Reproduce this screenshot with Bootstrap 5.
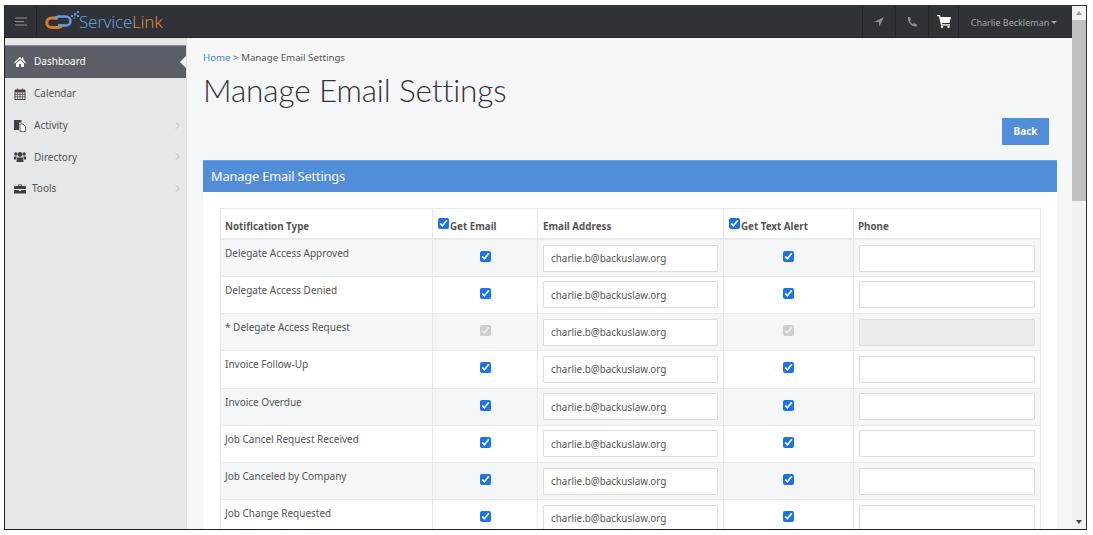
<!DOCTYPE html>
<html lang="en"><head><meta charset="utf-8"><title>Manage Email Settings</title>
<link href="https://cdn.jsdelivr.net/npm/bootstrap@5.3.0/dist/css/bootstrap.min.css" rel="stylesheet">
<style>
html,body{height:100%;overflow:hidden;background:#fff}
body{font-family:"Noto Sans",sans-serif;font-size:10px;color:#555}
.frame{margin:5px 6px 0 4px;height:525px;border:1px solid #222;border-top-color:#333;border-right:1px solid #333;display:flex;overflow:hidden}
.appcol{flex:1;min-width:0;display:flex;flex-direction:column}
.topbar{height:32px;background:#2f3237;flex:none;display:flex;align-items:stretch;color:#aaa;border-bottom:1px solid #222}
.burger{width:32px;display:flex;align-items:center;justify-content:center;border-right:1px solid #24262a}
.brand{display:flex;align-items:center;padding-left:7px;flex:1}
.brandtxt{font-family:"Noto Sans",sans-serif;font-weight:300;font-size:17px;letter-spacing:-.25px;color:#6a9ad6;line-height:1;margin-left:-5px}
.brandtxt span{color:#dd8a40}
.tbitem{width:33px;display:flex;align-items:center;justify-content:center;border-left:1px solid #24262a}
.tbitem.narrow{width:30px}
.tbuser{width:114px;border-left:1px solid #24262a;display:flex;align-items:center;justify-content:center;font-size:9px;color:#a5a7aa;gap:1px;padding-top:2px;padding-right:3px}
.caretdn{display:inline-block;border:3.5px solid transparent;border-top-color:#a5a7aa;border-bottom:0;margin-left:1px}
.lower{flex:1;display:flex;min-height:0}
.side{width:182px;background:#e6e7e8;flex:none;padding-top:7px;border-right:1px solid #ddd}
.sideitem{height:31.7px;display:flex;align-items:center;padding-left:9px;color:#555;font-size:10px;position:relative}
.sideitem svg.ic{width:12px;height:12px;margin-right:8px;flex:none}
.sideitem svg.ictight{margin-right:6px}
.sideitem.on{background:#5a5f67;color:#fff;height:33px;border-top:1px solid #8a8d92;padding-bottom:1px}
.sideitem.on::after{content:"";position:absolute;right:0;top:10px;border:6px solid transparent;border-right-color:#f5f6f8;border-left:0}
.chev{position:absolute;right:6px;top:12px;width:5px;height:7px}
.main{flex:1;min-width:0;background:#f5f6f8;padding:13px 15px 0 16px;overflow:hidden}
.crumb{font-size:9.7px;line-height:14px;color:#555}
.crumb a{color:#4f8bd6;text-decoration:none}
.pagetitle{font-family:Lato,sans-serif;font-size:31.5px;letter-spacing:-.12px;font-weight:300;line-height:40px;color:#333;margin:5px 0 0}
.backrow{display:flex;justify-content:flex-end;padding-right:8px;margin-top:8px}
.backbtn{background:#528dd9;border:0;color:#fff;font-size:10px;font-weight:700;width:47px;height:27px;padding:0;border-radius:1px}
.panelbox{background:#fff;margin-top:15px;height:400px}
.panelhead{height:32px;background:#528dd9;color:#fff;font-size:12.8px;letter-spacing:-.15px;display:flex;align-items:center;padding-left:8px;border-top:1px solid #6fa0df}
.panelbody{padding:16px 17px 0}
.mailtable{width:820px;table-layout:fixed;border-collapse:collapse;margin:0;font-size:10px;color:#555}
.mailtable th,.mailtable td{border:1px solid #e8e9eb;padding:0 5px;vertical-align:top}
.mailtable th{height:30.5px;font-weight:700;font-size:9.8px;vertical-align:middle;border-bottom-width:2px;background:#fff;color:#555;padding-top:7px;white-space:nowrap}
.mailtable th:first-child,.mailtable td:first-child,.mailtable th:last-child{padding-left:4px}
.mailtable td{height:37.25px}
.mailtable tbody tr:nth-child(odd) td{background:#f5f6f8}
.mailtable tbody tr:nth-child(even) td{background:#fff}
.rowlabel{padding-top:6px!important;line-height:14px}
.mailtable input[type=checkbox]{width:11px;height:11px;margin:0;accent-color:#1a73e8}
.thchk{vertical-align:1px;margin-right:1px!important}
.chkhead{padding-top:6px!important}
.chkcell{text-align:center;padding-top:11px!important;line-height:11px}
.addr{display:block;width:100%;height:27px;margin-top:4.5px;border:1px solid #dcdde0;background:#fff;font-size:9.9px;color:#555;padding:0 7px;font-family:inherit;border-radius:1px}
.addr:disabled{background:#ebecee}
.sbar{width:14px;flex:none;background:#f1f1f1;position:relative}
.sbtn{height:14px;display:flex;align-items:center;justify-content:center}
.sup{border:3.5px solid transparent;border-bottom:4px solid #9a9a9a;border-top:0}
.sdn{border:3.5px solid transparent;border-top:4px solid #444;border-bottom:0}
.sthumb{height:181px;background:#c1c1c1}
.sbtn.bot{position:absolute;bottom:0;left:0;right:0}
</style></head><body>
<div class="frame">
 <div class="appcol">
  <div class="topbar">
   <div class="burger"><svg width="12" height="9" viewBox="0 0 12 9"><path d="M0 1h12M0 4.500h9M0 8h12" stroke="#8d8f93" stroke-width="1"/></svg></div>
   <div class="brand">
    <svg width="40" height="24" viewBox="0 0 40 24">
     <path d="M14 8H7.500a4.700 4.700 0 0 0 0 9.400H14a4.700 4.700 0 0 0 4.200-3" fill="none" stroke="#e0782b" stroke-width="3"/>
     <path d="M14 15.500h8a4.500 4.500 0 0 0 0-9h-7a4.500 4.500 0 0 0-4 3" fill="none" stroke="#6a9ad6" stroke-width="2.600"/>
     <path d="M27 5h2v2h-2zM30 3h2.400v2.400H30zM33 1h2v2h-2zM33 5h2v2h-2zM29.500 7.500h1.500V9h-1.500z" fill="#6a9ad6"/>
    </svg>
    <span class="brandtxt">Service<span>Link</span></span>
   </div>
   <div class="tbitem"><svg width="10" height="10" viewBox="0 0 10 10"><path d="M10 0 0 5h5v5z" fill="#8d8f93"/></svg></div>
   <div class="tbitem"><svg width="10" height="10" viewBox="0 0 10 10"><path d="M1 0 3 0 4 3 3 4C3.500 5.500 4.500 6.500 6 7L7 6 10 7.500 9.500 9.500C5 10.500 0 5 1 0Z" fill="#8d8f93"/></svg></div>
   <div class="tbitem narrow"><svg width="14" height="13" viewBox="0 0 14 13"><path d="M0 0h3l.6 2H14l-1.500 6H5l.3 1.200H13V10.500H4L2 1.300H0Z" fill="#fff"/><circle cx="5" cy="11.800" r="1.200" fill="#fff"/><circle cx="11.500" cy="11.800" r="1.200" fill="#fff"/></svg></div>
   <div class="tbuser">Charlie Beckleman<span class="caretdn"></span></div>
  </div>
  <div class="lower">
   <nav class="side">
    <div class="sideitem on"><svg class="ic" viewBox="0 0 12 12"><path d="M6 1 0 6.500l.8.8L6 2.700l5.200 4.600.8-.8L9.500 4V1.500H8V2.700ZM2 7.500V11h3V8h2v3h3V7.500L6 4Z" fill="#fff"/></svg>Dashboard</div>
    <div class="sideitem"><svg class="ic" viewBox="0 0 12 12"><path d="M1 2h10v9.500H1Z" fill="none" stroke="#4a3f4a"/><path d="M1 2h10v2.500H1ZM3 .5h1V3H3ZM8 .5h1V3H8Z" fill="#4a3f4a"/><path d="M1 6.500h10M1 8.800h10M3.500 4.500v7M6 4.500v7M8.500 4.500v7" stroke="#4a3f4a" stroke-width=".7"/></svg>Calendar</div>
    <div class="sideitem"><svg class="ic" viewBox="0 0 12 12"><path d="M0 0h7.500v2.500H5V10H0Z" fill="#3f3f46"/><path d="M6 4h3l2.500 2.500V11.500H6Z" fill="#fff" stroke="#4a4a4a" stroke-width=".8"/></svg>Activity<svg class="chev" viewBox="0 0 6 9"><path d="M1 .5 5 4.500 1 8.500" fill="none" stroke="#aaa"/></svg></div>
    <div class="sideitem"><svg class="ic" viewBox="0 0 12 12"><circle cx="6" cy="3.500" r="2.400" fill="#3f3f46"/><circle cx="1.800" cy="3" r="1.700" fill="#3f3f46"/><circle cx="10.200" cy="3" r="1.700" fill="#3f3f46"/><path d="M3 6.500h6l.6 4.500H2.400ZM0 5.500h2.800L2 8.500H0ZM9.200 5.500H12v3H10Z" fill="#3f3f46"/></svg>Directory<svg class="chev" viewBox="0 0 6 9"><path d="M1 .5 5 4.500 1 8.500" fill="none" stroke="#aaa"/></svg></div>
    <div class="sideitem"><svg class="ic ictight" viewBox="0 0 12 12"><path d="M4 1.500h4V3h3.500a.5.500 0 0 1 .5.500V6H0V3.500A.5.500 0 0 1 .5 3H4ZM5 2.300V3h2v-.7ZM0 7h5v1h2V7h5v3.500H0Z" fill="#3f3f46"/></svg>Tools<svg class="chev" viewBox="0 0 6 9"><path d="M1 .5 5 4.500 1 8.500" fill="none" stroke="#aaa"/></svg></div>
   </nav>
   <main class="main">
    <div class="crumb"><a href="#">Home</a> &gt; Manage Email Settings</div>
    <h1 class="pagetitle">Manage Email Settings</h1>
    <div class="backrow"><button class="btn backbtn" type="button">Back</button></div>
    <section class="panelbox">
     <div class="panelhead">Manage Email Settings</div>
     <div class="panelbody">
      <table class="table mailtable">
       <colgroup><col style="width:212px"><col style="width:105px"><col style="width:186px"><col style="width:130px"><col style="width:187px"></colgroup>
       <thead><tr><th>Notification Type</th><th class="chkhead"><input class="thchk" type="checkbox" checked>Get Email</th><th>Email Address</th><th class="chkhead"><input class="thchk" type="checkbox" checked>Get Text Alert</th><th>Phone</th></tr></thead>
       <tbody id="rows">
        <tr><td class="rowlabel">Delegate Access Approved</td><td class="chkcell"><input type="checkbox" checked></td><td><input class="addr" value="charlie.b@backuslaw.org"></td><td class="chkcell"><input type="checkbox" checked></td><td><input class="addr"></td></tr>
        <tr><td class="rowlabel">Delegate Access Denied</td><td class="chkcell"><input type="checkbox" checked></td><td><input class="addr" value="charlie.b@backuslaw.org"></td><td class="chkcell"><input type="checkbox" checked></td><td><input class="addr"></td></tr>
        <tr><td class="rowlabel">* Delegate Access Request</td><td class="chkcell"><input type="checkbox" checked disabled></td><td><input class="addr" value="charlie.b@backuslaw.org"></td><td class="chkcell"><input type="checkbox" checked disabled></td><td><input class="addr" disabled></td></tr>
        <tr><td class="rowlabel">Invoice Follow-Up</td><td class="chkcell"><input type="checkbox" checked></td><td><input class="addr" value="charlie.b@backuslaw.org"></td><td class="chkcell"><input type="checkbox" checked></td><td><input class="addr"></td></tr>
        <tr><td class="rowlabel">Invoice Overdue</td><td class="chkcell"><input type="checkbox" checked></td><td><input class="addr" value="charlie.b@backuslaw.org"></td><td class="chkcell"><input type="checkbox" checked></td><td><input class="addr"></td></tr>
        <tr><td class="rowlabel">Job Cancel Request Received</td><td class="chkcell"><input type="checkbox" checked></td><td><input class="addr" value="charlie.b@backuslaw.org"></td><td class="chkcell"><input type="checkbox" checked></td><td><input class="addr"></td></tr>
        <tr><td class="rowlabel">Job Canceled by Company</td><td class="chkcell"><input type="checkbox" checked></td><td><input class="addr" value="charlie.b@backuslaw.org"></td><td class="chkcell"><input type="checkbox" checked></td><td><input class="addr"></td></tr>
        <tr><td class="rowlabel">Job Change Requested</td><td class="chkcell"><input type="checkbox" checked></td><td><input class="addr" value="charlie.b@backuslaw.org"></td><td class="chkcell"><input type="checkbox" checked></td><td><input class="addr"></td></tr>
       </tbody>
      </table>
     </div>
    </section>
   </main>
  </div>
 </div>
 <div class="sbar"><div class="sbtn"><span class="sup"></span></div><div class="sthumb"></div><div class="sbtn bot"><span class="sdn"></span></div></div>
</div>
<script src="https://cdn.jsdelivr.net/npm/bootstrap@5.3.0/dist/js/bootstrap.bundle.min.js"></script>
</body></html>
